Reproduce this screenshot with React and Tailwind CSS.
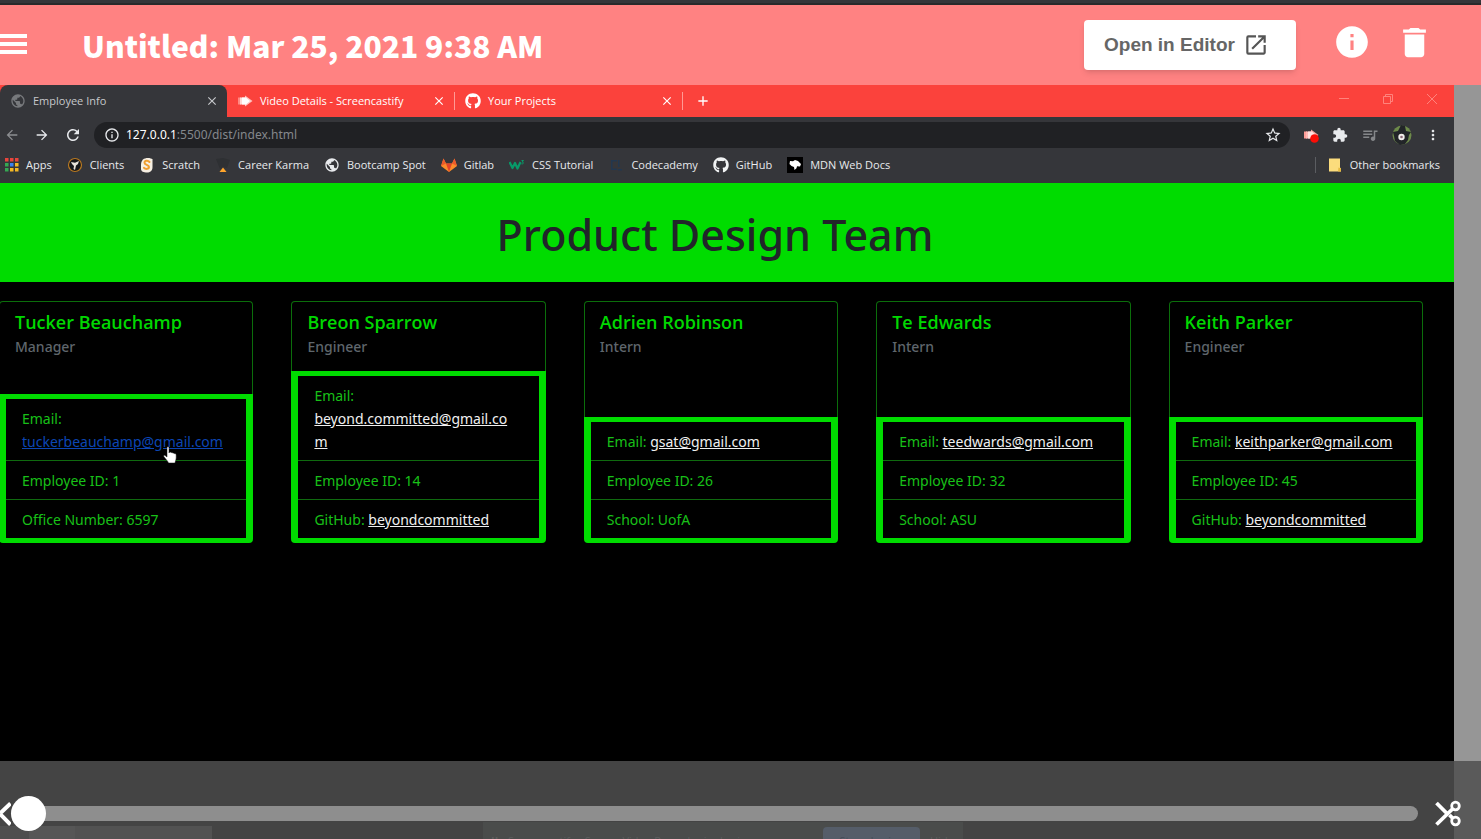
import React from "react";
import {
  MdAdd,
  MdArrowBack,
  MdArrowForward,
  MdClose,
  MdDelete,
  MdExtension,
  MdInfo,
  MdInfoOutline,
  MdMoreVert,
  MdOpenInNew,
  MdPublic,
  MdQueueMusic,
  MdRefresh,
  MdStarBorder,
} from "react-icons/md";
import { FaGithub } from "react-icons/fa";

const employees = [
  {
    name: "Tucker Beauchamp",
    role: "Manager",
    email: "tuckerbeauchamp@gmail.com",
    hovered: true,
    id: 1,
    extraLabel: "Office Number",
    extra: "6597",
  },
  {
    name: "Breon Sparrow",
    role: "Engineer",
    email: "beyond.committed@gmail.com",
    id: 14,
    extraLabel: "GitHub",
    extra: "beyondcommitted",
    link: true,
  },
  { name: "Adrien Robinson", role: "Intern", email: "gsat@gmail.com", id: 26, extraLabel: "School", extra: "UofA" },
  { name: "Te Edwards", role: "Intern", email: "teedwards@gmail.com", id: 32, extraLabel: "School", extra: "ASU" },
  {
    name: "Keith Parker",
    role: "Engineer",
    email: "keithparker@gmail.com",
    id: 45,
    extraLabel: "GitHub",
    extra: "beyondcommitted",
    link: true,
  },
];

function ScreencastifyIcon({ recording }) {
  return (
    <svg viewBox="0 0 16 16" className="size-4 shrink-0" aria-hidden="true">
      <path d="M1 4.500h3v7H1z" fill={recording ? "#ff9d97" : "#ff8a84"} />
      <path d="M3 4.500h6v7H3z" fill={recording ? "#ffb9b5" : "#ffd9d6"} />
      <path d="M8 2.500l7.500 5.500L8 13.500z" fill={recording ? "#f8a39e" : "#ffc4c0"} />
      <path d="M5 4.500h4l4 3.500-4 3.500H5z" fill={recording ? "#ffe1df" : "#fff"} />
      {recording && <circle cx="11.500" cy="11.500" r="4.300" fill="#fb0d06" />}
    </svg>
  );
}

function AppsIcon() {
  const colors = ["#e8453c", "#e8453c", "#e8453c", "#35a853", "#3b82f0", "#f4b824", "#35a853", "#f4b824", "#f4b824"];
  return (
    <svg viewBox="0 0 16 16" className="size-4 shrink-0" aria-hidden="true">
      {colors.map((color, i) => (
        <rect key={i} x={2 + (i % 3) * 5} y={1 + Math.floor(i / 3) * 5} width="3.500" height="3.500" fill={color} />
      ))}
    </svg>
  );
}

function ClientsIcon() {
  return (
    <svg viewBox="0 0 16 16" className="size-4 shrink-0" aria-hidden="true">
      <circle cx="8" cy="8" r="6.500" fill="#17181a" stroke="#b97a22" strokeWidth="1.200" />
      <path d="M4 5l4 .8 4-1.800-1 3-2 1.500-1 4.500-1.500-1 .5-3L5 7z" fill="#e9e3da" />
    </svg>
  );
}

function ScratchIcon() {
  return (
    <svg viewBox="0 0 16 16" className="size-4 shrink-0" aria-hidden="true">
      <path d="M4 2.500C6 .500 12 .500 13.500 2.500V10c0 4-2.500 5.500-5.500 5.500-3.500 0-6-1-6-3.500V8C2 6 2.500 4 4 2.500z" fill="#f6efe2" />
      <path
        d="M10.500 5c-1.500-1.800-5-1.500-5 .8C5.500 8.200 10 7.500 10 10c0 2.200-3.500 2.500-5 .8"
        fill="none"
        stroke="#f0a032"
        strokeWidth="2"
        strokeLinecap="round"
      />
    </svg>
  );
}

function CareerKarmaIcon() {
  return (
    <svg viewBox="0 0 16 16" className="size-4 shrink-0" aria-hidden="true">
      <path d="M1 2l7-1 7 2-3 8-4-1-3 2z" fill="#2e3033" />
      <path d="M8 10.500l3.500 4.500h-7z" fill="#ffa52b" />
    </svg>
  );
}

function GitlabIcon() {
  return (
    <svg viewBox="0 0 16 16" className="size-4 shrink-0" aria-hidden="true">
      <path d="M0 9L2.500 1.500 5 6.500h6l2.500-5L16 9l-8 6z" fill="#fb8c2a" />
      <path d="M5 6.500h6L8 15z" fill="#e24329" />
      <path d="M0 9L2.500 1.500 5 6.500zM16 9l-2.500-7.500-2.500 5z" fill="#ec5a2c" />
    </svg>
  );
}

function W3Icon() {
  return (
    <svg viewBox="0 0 16 16" className="size-4 shrink-0" fill="none" stroke="#079a69" aria-hidden="true">
      <path d="M.5 5l3 6 2.500-5 2.500 5.500L11.500 5" strokeWidth="2.200" strokeLinejoin="round" />
      <path d="M12.500 3.500h2l-1.300 1.500c2 0 1.500 2.500-.8 1.800" strokeWidth="1" />
    </svg>
  );
}

function CodecademyIcon() {
  return (
    <svg viewBox="0 0 16 16" className="size-4 shrink-0" aria-hidden="true">
      <path d="M3 3h6v1.500H4.500v7H9V13H3zM10 3h1.500v7H10zM10 12h4v1.500h-4z" fill="#22374f" />
    </svg>
  );
}

function MdnIcon() {
  return (
    <svg viewBox="0 0 16 16" className="size-4 shrink-0" aria-hidden="true">
      <rect width="16" height="16" fill="#000" />
      <path d="M3 4l3 .3L8 3l3 1 3 3-1 2.500-3-.2-.5 2-2 1.700-.5-3L4.500 9 2.500 7z" fill="#fff" />
    </svg>
  );
}

const bookmarks = [
  ["Apps", <AppsIcon />],
  ["Clients", <ClientsIcon />],
  ["Scratch", <ScratchIcon />],
  ["Career Karma", <CareerKarmaIcon />],
  ["Bootcamp Spot", <MdPublic className="size-4 shrink-0 text-[#e8eaed]" />],
  ["Gitlab", <GitlabIcon />],
  ["CSS Tutorial", <W3Icon />],
  ["Codecademy", <CodecademyIcon />],
  ["GitHub", <FaGithub className="size-4 shrink-0 text-[#f1f3f4]" />],
  ["MDN Web Docs", <MdnIcon />],
];

function TopBar() {
  return (
    <header className="flex h-20 shrink-0 items-center bg-[#ff8282] pr-[47px] text-white">
      <button type="button" aria-label="Menu" className="flex w-[27px] flex-col gap-1 pb-0.5">
        <span className="h-1 w-full bg-white" />
        <span className="h-1 w-full bg-white" />
        <span className="h-1 w-full bg-white" />
      </button>
      <h1 className="ml-[55px] flex-1 font-['Noto_Sans_CJK_SC','Liberation_Sans',sans-serif] text-[30px] leading-10 font-black whitespace-nowrap">
        Untitled: Mar 25, 2021 9:38 AM
      </h1>
      <button
        type="button"
        className="flex h-[50px] w-[212px] items-center gap-2 rounded-sm bg-white px-5 font-['Liberation_Sans',sans-serif] text-[19px] font-bold whitespace-nowrap text-[#666] shadow-md"
      >
        Open in Editor
        <MdOpenInNew className="size-[26px] text-[#555]" />
      </button>
      <button type="button" aria-label="Info" className="ml-[37px] pb-1.5">
        <MdInfo className="size-[38px]" />
      </button>
      <button type="button" aria-label="Delete" className="ml-6 pb-1.5">
        <MdDelete className="size-[39px]" />
      </button>
    </header>
  );
}

function BrowserTab({ icon, title, active }) {
  return (
    <div
      className={
        active
          ? "flex w-[227px] items-center rounded-t-lg bg-[#35363a] pr-2 pl-2.5 text-[#c6c8cb]"
          : "flex w-[228px] items-center pl-2.5 text-white"
      }
    >
      {icon}
      <span className="ml-[7px] flex-1">{title}</span>
      <button type="button" aria-label={"Close " + title}>
        <MdClose className="size-3.5" />
      </button>
      {!active && <span className="ml-2 h-[18px] w-px bg-[#ff9a94]" />}
    </div>
  );
}

function BrowserChrome() {
  return (
    <div className="font-['Open_Sans','Noto_Sans',sans-serif] whitespace-nowrap">
      <div className="flex h-8 items-stretch bg-[#fb423c] text-[11px]">
        <BrowserTab active title="Employee Info" icon={<MdPublic className="size-4 text-[#77797c]" />} />
        <BrowserTab title="Video Details - Screencastify" icon={<ScreencastifyIcon />} />
        <BrowserTab title="Your Projects" icon={<FaGithub className="size-4 text-white" />} />
        <button type="button" aria-label="New tab" className="ml-3 text-white">
          <MdAdd className="size-4" />
        </button>
        <div className="ml-auto flex items-center gap-8 pr-4 pb-1 text-[#ff837c]">
          <button type="button" aria-label="Minimize">
            <svg viewBox="0 0 12 12" className="size-3" stroke="currentColor">
              <path d="M1 5.500h10" />
            </svg>
          </button>
          <button type="button" aria-label="Restore">
            <svg viewBox="0 0 12 12" className="size-3" fill="none" stroke="currentColor">
              <path d="M1.500 3.500h7v7h-7zM3.500 3.500v-2h7v7h-2" />
            </svg>
          </button>
          <button type="button" aria-label="Close window">
            <svg viewBox="0 0 12 12" className="size-3" stroke="currentColor">
              <path d="M1 1l10 10M11 1L1 11" />
            </svg>
          </button>
        </div>
      </div>
      <div className="flex h-[34px] items-center bg-[#35363a] pt-0.5 pr-[13px] pl-1 text-[#e8eaed]">
        <div className="flex items-center gap-3.5">
          <button type="button" aria-label="Back">
            <MdArrowBack className="size-4 text-[#8c8e91]" />
          </button>
          <button type="button" aria-label="Forward">
            <MdArrowForward className="size-4" />
          </button>
          <button type="button" aria-label="Reload">
            <MdRefresh className="size-[18px]" />
          </button>
        </div>
        <div className="ml-3 flex h-[26px] flex-1 items-center rounded-full bg-[#202124] pr-2 pl-2.5">
          <MdInfoOutline className="size-4" />
          <div
            role="textbox"
            aria-label="Address"
            className="ml-1.5 flex-1 font-['Noto_Sans',sans-serif] text-[12px] text-[#85888c]"
          >
            <span className="text-white">127.0.0.1</span>:5500/dist/index.html
          </div>
          <button type="button" aria-label="Bookmark this page">
            <MdStarBorder className="size-[18px]" />
          </button>
        </div>
        <div className="ml-[13px] flex items-center gap-[13px]">
          <button type="button" aria-label="Screencastify">
            <ScreencastifyIcon recording />
          </button>
          <button type="button" aria-label="Extensions">
            <MdExtension className="size-4" />
          </button>
          <button type="button" aria-label="Media controls">
            <MdQueueMusic className="size-[18px] text-[#85878a]" />
          </button>
          <button type="button" aria-label="Profile">
            <svg viewBox="0 0 20 20" className="size-5">
              <circle cx="10" cy="10" r="9.500" fill="#6d8a4a" />
              <path d="M1 7l5-1L9 0l4 1 1 5 5 1-2 3-1 5-3 4-5 1-5-4-1-5z" fill="#222528" />
              <circle cx="9.500" cy="12" r="3.200" fill="#f0eeec" />
              <circle cx="9.500" cy="12" r="1.300" fill="#8b6a78" />
            </svg>
          </button>
          <button type="button" aria-label="Browser menu">
            <MdMoreVert className="size-4" />
          </button>
        </div>
      </div>
      <div className="flex h-8 items-center justify-between bg-[#35363a] pr-3.5 pb-1 pl-[3px] text-[11px] text-[#e8eaed]">
        <nav className="flex items-center gap-[15px]" aria-label="Bookmarks">
          {bookmarks.map(([label, icon]) => (
            <a key={label} href="#" className="flex items-center gap-[7px]">
              {icon}
              {label}
            </a>
          ))}
        </nav>
        <a href="#" className="flex items-center gap-2">
          <span className="mr-1 h-4 w-px bg-[#5b5d61]" />
          <svg viewBox="0 0 14 16" className="h-4 w-3.5" aria-hidden="true">
            <path d="M1 1.500h11v9l1 1v3H1z" fill="#fbdc7c" />
            <path d="M10.500 10.500l2.500 1v3h-3z" fill="#e5b93f" />
          </svg>
          Other bookmarks
        </a>
      </div>
    </div>
  );
}

function HandCursor() {
  return (
    <svg viewBox="0 0 14 18" className="absolute top-4 left-[141px] h-[18px] w-3.5" aria-hidden="true">
      <path
        d="M4 1.500c0-1 2-1 2 0V7l.5-.8c.5-.5 1.500-.2 1.700.6.500-.5 1.600-.3 1.800.5.600-.5 1.600-.2 1.800.600.700-.3 1.400.100 1.400 1V12c0 2-1 3-1.200 5H5.500C5 15 2 12.500.800 10.500c-.500-1 .8-1.600 1.600-.8L4 11z"
        fill="#fff"
        stroke="#111"
        strokeWidth=".5"
      />
    </svg>
  );
}

function EmployeeCard({ person }) {
  return (
    <article className="flex min-w-0 flex-col">
      <div className="flex-1 rounded-t-sm border border-b-0 border-[#0b6e0b] px-[15px] pt-[9px] pb-[13px]">
        <h3 className="font-['Open_Sans',sans-serif] text-[18px] leading-[22px] font-semibold whitespace-nowrap text-[#00d800]">
          {person.name}
        </h3>
        <p className="mt-[3px] text-[14px] leading-[22px] font-medium text-[#5f666c]">{person.role}</p>
      </div>
      <ul className="rounded-b-sm border-x-[7px] border-y-[5px] border-[#00dc00] text-[14px] leading-[23px] text-[#18c018]">
        <li className="border-b border-[#0f6a0f] pt-2 pr-5 pb-[7px] pl-4 break-words">
          Email:{" "}
          {person.hovered ? (
            <a href={"mailto:" + person.email} className="relative inline-block text-[#0c46b4] underline">
              {person.email}
              <HandCursor />
            </a>
          ) : (
            <a href={"mailto:" + person.email} className="text-[#f0f0f0] underline">
              {person.email}
            </a>
          )}
        </li>
        <li className="border-b border-[#0f6a0f] px-4 pt-2 pb-[7px]">Employee ID: {person.id}</li>
        <li className="px-4 pt-2 pb-[7px]">
          {person.extraLabel}:{" "}
          {person.link ? (
            <a href={"https://github.com/" + person.extra} className="text-[#f0f0f0] underline">
              {person.extra}
            </a>
          ) : (
            person.extra
          )}
        </li>
      </ul>
    </article>
  );
}

function TeamPage() {
  return (
    <div className="flex-1 bg-black font-['Noto_Sans','Open_Sans',sans-serif]">
      <div className="flex h-[99px] items-center justify-center bg-[#00dc00] pt-1 pr-6">
        <h2 className="text-[43px] leading-[60px] font-medium whitespace-nowrap text-[#212529]">Product Design Team</h2>
      </div>
      <div className="mt-[19px] mr-[31px] -ml-px grid grid-cols-5 gap-x-[38px]">
        {employees.map((person) => (
          <EmployeeCard key={person.name} person={person} />
        ))}
      </div>
    </div>
  );
}

function TrimBar() {
  return (
    <footer className="relative h-[78px] shrink-0 overflow-hidden bg-[#5a5a5a]">
      <div className="absolute inset-y-0 right-[27px] left-0 bg-[#444]">
        <div className="absolute bottom-0 left-0 flex h-[13px] w-[212px] bg-[#525252]">
          <span className="w-[29px] bg-[#4e4e4e]" />
          <span className="w-[46px] bg-[#565656]" />
        </div>
        <div className="absolute top-[61px] left-[483px] flex h-8 w-[480px] items-start bg-[#4a4c4b] pt-[5px] pl-2 font-['Open_Sans',sans-serif] text-[11px] leading-7 whitespace-nowrap text-[#5c5d5d]">
          <span className="w-[17px] shrink-0 font-bold">II</span>
          <span className="w-[315px] shrink-0">Screencastify - Screen Video Recorder is sharing your screen.</span>
          <span className="w-[97px] shrink-0 rounded-sm bg-[#555d69] text-center text-[#454c58]">Stop sharing</span>
          <span className="ml-2.5">Hide</span>
        </div>
      </div>
      <div className="relative flex h-[35px] translate-y-[35px] items-center">
        <svg viewBox="0 0 11 24" className="h-6 w-[11px] shrink-0" fill="none" stroke="#fff" strokeWidth="4" aria-hidden="true">
          <path d="M10.500 1.500L0 11.500M0 12l10.500 10.500" />
        </svg>
        <input
          type="range"
          min="0"
          max="100"
          defaultValue="0"
          aria-label="Playback position"
          className="h-[35px] min-w-0 flex-1 appearance-none bg-transparent [&::-webkit-slider-runnable-track]:h-[15px] [&::-webkit-slider-runnable-track]:rounded-full [&::-webkit-slider-runnable-track]:bg-[#8e8e8e] [&::-webkit-slider-thumb]:-mt-2.5 [&::-webkit-slider-thumb]:size-[35px] [&::-webkit-slider-thumb]:appearance-none [&::-webkit-slider-thumb]:rounded-full [&::-webkit-slider-thumb]:bg-white"
        />
        <button type="button" aria-label="Cut" className="mr-[19px] ml-4">
          <svg viewBox="0 0 28 28" className="size-7" fill="none" stroke="#fff">
            <path d="M2.500 3l10 10M2.500 24.500L19 8.500M15.500 15l3.500 3.500" strokeWidth="3.800" />
            <circle cx="21.500" cy="6" r="3.800" strokeWidth="2.800" />
            <circle cx="21.500" cy="21" r="3.800" strokeWidth="2.800" />
          </svg>
        </button>
      </div>
    </footer>
  );
}

export default function App() {
  return (
    <div className="flex min-h-screen flex-col overflow-hidden bg-[#969696]">
      <div className="h-[5px] shrink-0 border-b-2 border-[#292a2b] bg-[#35363a]" />
      <TopBar />
      <main className="mr-[27px] flex flex-1 flex-col">
        <BrowserChrome />
        <TeamPage />
      </main>
      <TrimBar />
    </div>
  );
}
